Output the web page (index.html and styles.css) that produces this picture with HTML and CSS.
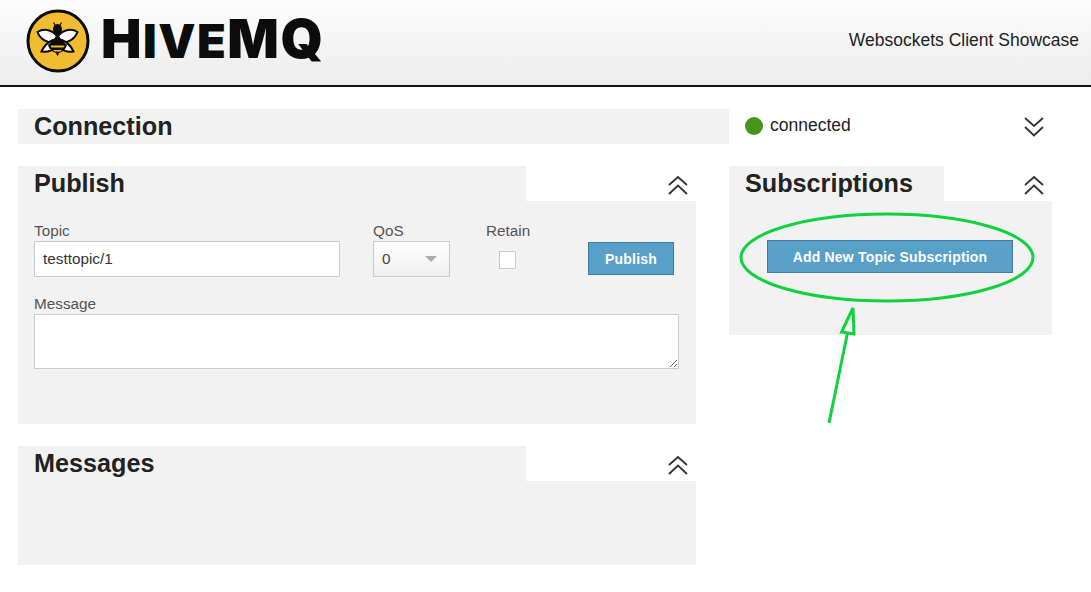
FILE: index.html
```html
<!DOCTYPE html>
<html lang="en">
<head>
<meta charset="utf-8">
<title>HiveMQ Websockets Client Showcase</title>
<link rel="stylesheet" href="styles.css">
</head>
<body>
<header class="site-header">
  <div class="brand">
    <svg class="brand-mark" width="64" height="64" viewBox="0 0 64 64" aria-hidden="true">
      <circle cx="32" cy="32" r="30" fill="#f2bc32" stroke="#0c0c0c" stroke-width="3"/>
      <path d="M31 27 C25 20 17 19.500 11.500 23 C14 30 21 34 28 33.500 Z" fill="#fff" stroke="#0c0c0c" stroke-width="2"/>
      <path d="M32 27 C38 20 46 19.500 51.500 23 C49 30 42 34 35 33.500 Z" fill="#fff" stroke="#0c0c0c" stroke-width="2"/>
      <path d="M27 31 C22 33 18 37 15.500 42.500 C21 43.500 26 42 30 38 Z" fill="#fff" stroke="#0c0c0c" stroke-width="2"/>
      <path d="M36 31 C41 33 45 37 47.500 42.500 C42 43.500 37 42 33 38 Z" fill="#fff" stroke="#0c0c0c" stroke-width="2"/>
      <ellipse cx="31.500" cy="20.500" rx="4.500" ry="5.500" fill="#0c0c0c"/>
      <path d="M29.500 17 L27.500 13.500 M33.500 17 L35.500 13.500" stroke="#0c0c0c" stroke-width="1.200" fill="none"/>
      <path d="M31.500 26.500 L41 36 C40 40 36 43.500 31.500 44.500 C27 43.500 23 40 22 36 Z" fill="#0c0c0c"/>
      <path d="M24.500 36.500 H38.500 L37.500 38.500 H25.500 Z M27 41 H36 L34.500 42.500 H28.500 Z" fill="#f2bc32"/>
      <path d="M30 44 H33 L31.500 47.500 Z" fill="#0c0c0c"/>
    </svg>
    <div class="wordmark"><span class="cap">H</span>IVE<span class="cap">MQ</span></div>
  </div>
  <div class="tagline">Websockets Client Showcase</div>
</header>

<main class="page">
  <section class="connection-row">
    <h2 class="connection-title">Connection</h2>
    <div class="status">
      <span class="status-dot"></span>
      <span class="status-text">connected</span>
      <svg class="chevrons" width="22" height="22" viewBox="0 0 22 22" aria-hidden="true"><path d="M2 2 L11 10 L20 2 M2 11 L11 19.500 L20 11"/></svg>
    </div>
  </section>

  <div class="columns">
    <div class="col-left">
      <section class="panel">
        <div class="panel-head">
          <h2 class="panel-title tab-wide">Publish</h2>
          <svg class="chevrons" width="22" height="22" viewBox="0 0 22 22" aria-hidden="true"><path d="M2 11 L11 3 L20 11 M2 20 L11 11.500 L20 20"/></svg>
        </div>
        <form class="panel-body publish-body">
          <div class="form-row">
            <label class="field field-topic"><span class="label">Topic</span><input class="text-input" type="text" value="testtopic/1"></label>
            <div class="field field-qos"><span class="label">QoS</span><div class="select-box"><span>0</span><i class="caret"></i></div></div>
            <div class="field field-retain"><span class="label">Retain</span><span class="checkbox"></span></div>
            <button class="btn btn-publish" type="button">Publish</button>
          </div>
          <label class="field field-message"><span class="label">Message</span><textarea class="text-area"></textarea></label>
        </form>
      </section>

      <section class="panel">
        <div class="panel-head">
          <h2 class="panel-title tab-wide">Messages</h2>
          <svg class="chevrons" width="22" height="22" viewBox="0 0 22 22" aria-hidden="true"><path d="M2 11 L11 3 L20 11 M2 20 L11 11.500 L20 20"/></svg>
        </div>
        <div class="panel-body messages-body"></div>
      </section>
    </div>

    <div class="col-right">
      <section class="panel">
        <div class="panel-head">
          <h2 class="panel-title tab-narrow">Subscriptions</h2>
          <svg class="chevrons" width="22" height="22" viewBox="0 0 22 22" aria-hidden="true"><path d="M2 11 L11 3 L20 11 M2 20 L11 11.500 L20 20"/></svg>
        </div>
        <div class="panel-body subs-body">
          <button class="btn btn-add" type="button">Add New Topic Subscription</button>
        </div>
      </section>
    </div>
  </div>
</main>

<svg class="annotation" width="1091" height="592" viewBox="0 0 1091 592" aria-hidden="true">
  <ellipse cx="887" cy="257.500" rx="146" ry="43.500"/>
  <path d="M829 423 L847.500 333"/>
  <path d="M853 308 L841.500 332 L854 334 Z"/>
</svg>
</body>
</html>
```
FILE: styles.css
```css
* { box-sizing: border-box; }
html, body { margin: 0; padding: 0; }
body {
  width: 1091px;
  height: 592px;
  overflow: hidden;
  background: #fff;
  color: #222;
  font-family: "Liberation Sans", Arial, sans-serif;
  position: relative;
}
.site-header {
  height: 87px;
  border-bottom: 2px solid #111;
  background: linear-gradient(#fdfdfd, #ececec);
  display: flex;
  align-items: center;
  justify-content: space-between;
  padding: 0 12px 4px 26px;
}
.brand { display: flex; align-items: center; gap: 11px; }
.brand-mark { display: block; }
.wordmark {
  font-family: Inter, sans-serif;
  font-weight: 900;
  font-size: 47px;
  line-height: 44px;
  color: #0c0c0c;
  letter-spacing: 1.500px;
  white-space: nowrap;
  margin-bottom: 2px;
}
.wordmark .cap { font-size: 54px; }
.tagline { font-size: 17.500px; color: #222; margin-bottom: 1px; }

.page { padding: 22px 0 0 18px; }
.connection-row { display: flex; height: 35px; }
.connection-title {
  width: 711px;
  margin: 0;
  padding-left: 16px;
  background: #f2f2f2;
  font-size: 25.200px;
  line-height: 35px;
  font-weight: 700;
}
.status {
  width: 323px;
  display: flex;
  align-items: center;
  padding-left: 16px;
  padding-bottom: 2px;
}
.status-dot { width: 18px; height: 18px; border-radius: 50%; background: #47951c; }
.status-text { font-size: 17.500px; margin-left: 7px; flex: 1; color: #222; }
.status .chevrons { margin-right: 7px; margin-top: 2px; }
.chevrons { display: block; flex: none; }
.chevrons path { fill: none; stroke: #333; stroke-width: 1.800; }

.columns { display: flex; margin-top: 22px; gap: 33px; }
.col-left { width: 678px; display: flex; flex-direction: column; gap: 22px; }
.col-right { width: 323px; }
.panel-head { display: flex; justify-content: space-between; height: 35px; align-items: center; padding-right: 7px; }
.panel-title {
  margin: 0;
  height: 35px;
  padding-left: 16px;
  background: #f2f2f2;
  font-size: 25.200px;
  line-height: 35px;
  font-weight: 700;
}
.tab-wide { width: 508px; }
.tab-narrow { width: 215px; }
.panel-head .chevrons { margin-top: 2px; }
.panel-body { background: #f2f2f2; }
.publish-body { height: 223px; padding: 21px 17px 0 16px; }
.messages-body { height: 84px; }
.subs-body { height: 134px; padding: 39px 0 0 38px; }

.form-row { display: flex; align-items: flex-start; }
.field { display: flex; flex-direction: column; }
.label { font-size: 15.300px; line-height: 17px; margin-bottom: 2px; color: #555; display: block; }
.field-topic { width: 306px; }
.field-qos { width: 77px; margin-left: 33px; }
.field-retain { width: 61px; margin-left: 36px; }
.field-message { margin-top: 18px; }
.text-input {
  width: 306px;
  height: 36px;
  border: 1px solid #ccc;
  background: #fff;
  padding: 0 8px;
  font: 15.300px "Liberation Sans", Arial, sans-serif;
  color: #333;
  border-radius: 0;
  outline: none;
}
.select-box {
  height: 36px;
  border: 1px solid #ccc;
  background: linear-gradient(#fff, #efefef);
  display: flex;
  align-items: center;
  justify-content: space-between;
  padding: 0 12px 0 8px;
  font-size: 15.300px;
  color: #444;
}
.caret { width: 0; height: 0; border-left: 6px solid transparent; border-right: 6px solid transparent; border-top: 6px solid #aaa; }
.checkbox { display: block; width: 17px; height: 18px; margin: 10px 0 0 13px; background: #fff; border: 1px solid #ccc; }
.text-area {
  display: block;
  width: 645px;
  height: 55px;
  border: 1px solid #ccc;
  background: #fff;
  border-radius: 0;
  outline: none;
  margin: 0;
}
.btn {
  background: #59a0c9;
  border: 1px solid #3f7c9f;
  color: #fff;
  font: 700 14px "Liberation Sans", Arial, sans-serif;
  letter-spacing: .2px;
  padding: 0;
  border-radius: 0;
}
.btn-publish { width: 86px; height: 33px; margin: 20px 0 0 41px; }
.btn-add { width: 246px; height: 33px; }

.annotation { position: absolute; left: 0; top: 0; pointer-events: none; }
.annotation ellipse, .annotation path { fill: none; stroke: #10d23f; stroke-width: 3; }
```
